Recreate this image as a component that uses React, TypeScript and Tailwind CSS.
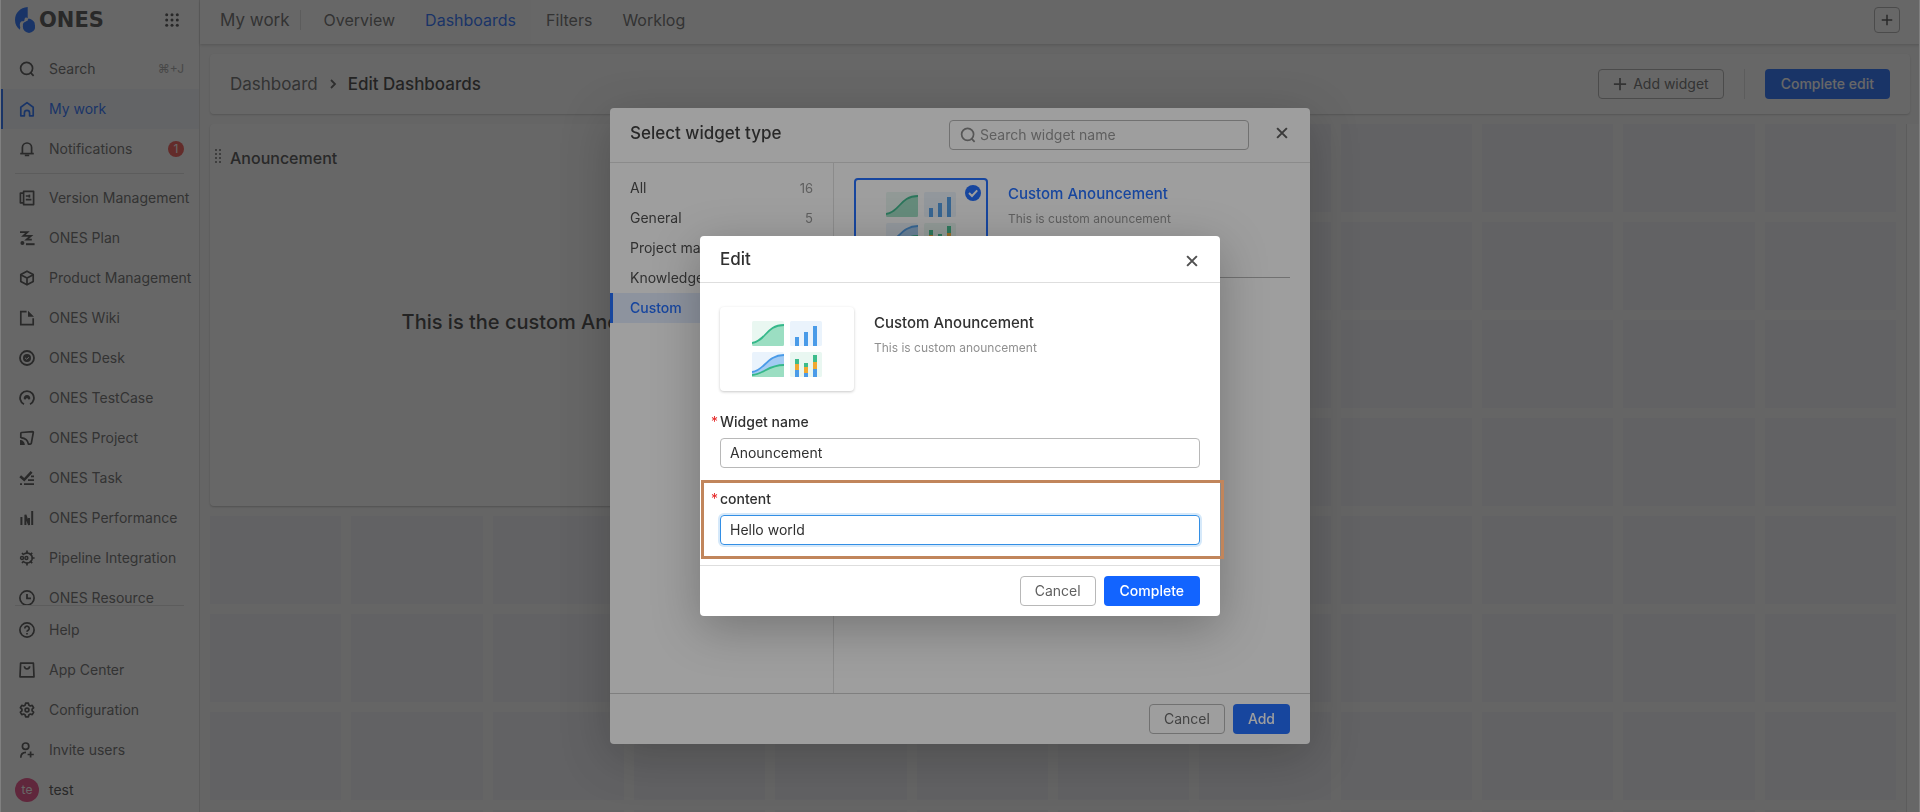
import type { ReactNode } from "react";

type IconProps = { children: ReactNode; className?: string };

function Icon({ children, className = "size-4" }: IconProps) {
  return (
    <svg
      viewBox="0 0 16 16"
      className={`${className} shrink-0`}
      fill="none"
      stroke="currentColor"
      strokeWidth="1.7"
      aria-hidden="true"
    >
      {children}
    </svg>
  );
}

const SearchIcon = ({ className }: { className?: string }) => (
  <Icon className={className}>
    <circle cx="7.6" cy="7.3" r="6" />
    <path d="M11.6 11.6 14.6 14.8" />
  </Icon>
);

const HomeIcon = () => (
  <Icon>
    <path d="M1.8 6.2 8 1.6l6.200 4.600v8.600H10.600v-2.800a2.600 2.600 0 0 0-5.200 0v2.800H1.800z" strokeLinejoin="round" />
  </Icon>
);

const BellIcon = () => (
  <Icon>
    <path d="M3.400 12.400V6.600a4.600 4.600 0 0 1 9.200 0v5.800" />
    <path d="M1.200 12.600h13.600" />
    <path d="M5.800 14.400h4.400" />
  </Icon>
);

const VersionIcon = () => (
  <Icon>
    <path d="M4.600 1.400h10v13.200h-10z" strokeLinejoin="round" />
    <path d="M4.600 3.200H1.400v9.600h3.200" strokeLinejoin="round" />
    <path d="M6.800 6h3.400M6.800 9.600h5.600" />
    <path d="M10.400 4.600v3" />
  </Icon>
);

const PlanIcon = () => (
  <Icon>
    <path d="M1 2.200h7.400L4.400 5.800h7.600L7.600 9.600h5.200" strokeWidth="1.800" />
    <path d="M7 14.200h8.600" strokeWidth="2" />
    <circle cx="3.400" cy="13" r="2" fill="currentColor" stroke="none" />
  </Icon>
);

const CubeIcon = () => (
  <Icon>
    <path d="M8 1.200 14.200 4.600v6.800L8 14.800 1.800 11.400V4.600z" strokeLinejoin="round" />
    <path d="M2.200 5 8 8l5.800-3M8 8v6.400" />
  </Icon>
);

const WikiIcon = () => (
  <Icon>
    <path d="M7.600 1.600H1.800v13h12.400V8.200" />
    <path d="M9 .8v6h6z" fill="currentColor" stroke="none" />
  </Icon>
);

const DeskIcon = () => (
  <Icon>
    <circle cx="8" cy="8" r="7" strokeWidth="1.800" />
    <circle cx="8" cy="8" r="4" fill="currentColor" stroke="none" />
    <path d="M6 7.800 7.600 9.200 10 7.200" stroke="#ffffff" strokeWidth="1" />
  </Icon>
);

const TestCaseIcon = () => (
  <Icon>
    <path d="M5 14.200a6.900 6.900 0 1 1 6 0" strokeWidth="1.800" />
    <path d="M4.800 9.200a3.300 3.300 0 1 1 6.400 0l-1.800.4-1.400-1.800-1.400 1.800z" fill="currentColor" stroke="none" />
  </Icon>
);

const ProjectIcon = () => (
  <Icon>
    <path d="M1.800 8V3.400Q1.800 2.600 2.600 2.500L13.400 1.600Q14.400 1.600 14.300 2.600L12.300 13.400Q12.100 14.200 11.200 14.200H9.400C9 10.800 6.400 8.200 1.800 7.600" strokeLinejoin="round" />
    <path d="M1 10c2.600 0 4.800 2 4.800 5H1z" fill="currentColor" stroke="none" />
  </Icon>
);

const TaskIcon = () => (
  <Icon>
    <path d="M1.200 6.200 5.200 9.800 12.600 1.800" strokeWidth="2.600" />
    <path d="M12 6.400h3M9 10.200h6M5 14.200h10M1 14.200h2" strokeWidth="1.800" />
  </Icon>
);

const PerformanceIcon = () => (
  <Icon>
    <path d="M2.400 7v8M13.200 1v14" strokeWidth="2" />
    <path d="M6.400 15V4.800L10 15V8" strokeWidth="2" />
  </Icon>
);

const PipelineIcon = () => (
  <Icon>
    <path d="M8 .600v3M8 12.400v3M12.400 8h3.200M3 3l1.800 1.800M13.200 2.800l-2 2M13.200 13.200l-2-2M3 13l1.800-1.800" />
    <path d="M5 4.200a5 5 0 1 1 0 7.600" />
    <circle cx="3" cy="8" r="1.500" strokeWidth="1.400" />
    <circle cx="7.400" cy="8" r="1.500" strokeWidth="1.400" />
  </Icon>
);

const ClockIcon = () => (
  <Icon>
    <circle cx="8" cy="8" r="7.100" />
    <path d="M8 4v4.400h4" strokeWidth="1.800" />
  </Icon>
);

const HelpIcon = () => (
  <Icon>
    <circle cx="8" cy="8" r="7.100" />
    <path d="M5.800 6.400a2.200 2.200 0 1 1 3.400 1.800c-.8.500-1.200.8-1.200 1.600" />
    <path d="M8 11v1.600" />
  </Icon>
);

const AppCenterIcon = () => (
  <Icon>
    <path d="M1.600 1.200h12.800l.6 13.600H1z" strokeLinejoin="round" />
    <path d="M5.400 4.200a2.600 2.600 0 0 0 5.200 0" />
  </Icon>
);

const GearIcon = () => (
  <Icon>
    <path
      d="M6.600 1.200h2.800l.4 1.900 1.500.9 1.900-.6 1.400 2.400-1.500 1.300v1.800l1.500 1.300-1.400 2.400-1.900-.6-1.500.9-.4 1.900H6.600l-.4-1.900-1.500-.9-1.900.6-1.400-2.400 1.500-1.300V7.100L1.400 5.800l1.400-2.400 1.900.6 1.500-.9z"
      strokeLinejoin="round"
    />
    <circle cx="8" cy="8" r="1.900" />
  </Icon>
);

const InviteIcon = () => (
  <Icon>
    <circle cx="6.600" cy="4.200" r="3.200" />
    <path d="M1.800 15.800c0-3.400 2-5.400 5.200-5.400" />
    <path d="M11.600 9.400v6.200M8.600 12.500h6.200" />
  </Icon>
);

const PlusIcon = ({ className }: { className?: string }) => (
  <Icon className={className}>
    <path d="M8 1v14M1 8h14" strokeWidth="2" />
  </Icon>
);

const CloseIcon = () => (
  <Icon className="size-3">
    <path d="M1.500 1.500 14.500 14.500M14.500 1.500 1.500 14.500" strokeWidth="2.700" />
  </Icon>
);

function Logo() {
  return (
    <svg viewBox="0 0 20 26" className="h-[26px] w-5 shrink-0" fill="#1264ff" aria-hidden="true">
      <path d="M12.700 0C5 .7 0 6 0 13c0 4 1.800 7.500 4.800 9.800l.5-2.400c-.7-2.200-.7-4.500.7-5.700 1-.8 2.200 0 3.100-.8.8-.8.1-2.300 1.200-3.100.8-.6 1.700-.2 2.400.5z" />
      <path d="M8 19.200c-.6-2.400.5-3.500 2.200-3.700 1.900-.2 2.700-1.100 2.500-2.600l.8-1.500c2.700.3 5 1.800 6.200 4.700l-1.500 3.900z" />
      <circle cx="14" cy="19.700" r="6.200" />
    </svg>
  );
}

type NavItem = { label: string; icon: ReactNode };

const appItems: NavItem[] = [
  { label: "Version Management", icon: <VersionIcon /> },
  { label: "ONES Plan", icon: <PlanIcon /> },
  { label: "Product Management", icon: <CubeIcon /> },
  { label: "ONES Wiki", icon: <WikiIcon /> },
  { label: "ONES Desk", icon: <DeskIcon /> },
  { label: "ONES TestCase", icon: <TestCaseIcon /> },
  { label: "ONES Project", icon: <ProjectIcon /> },
  { label: "ONES Task", icon: <TaskIcon /> },
  { label: "ONES Performance", icon: <PerformanceIcon /> },
  { label: "Pipeline Integration", icon: <PipelineIcon /> },
  { label: "ONES Resource", icon: <ClockIcon /> },
];

const footerItems: NavItem[] = [
  { label: "Help", icon: <HelpIcon /> },
  { label: "App Center", icon: <AppCenterIcon /> },
  { label: "Configuration", icon: <GearIcon /> },
  { label: "Invite users", icon: <InviteIcon /> },
];

function NavLink({ label, icon, active = false, children }: NavItem & { active?: boolean; children?: ReactNode }) {
  return (
    <a
      href="#"
      className={`flex h-10 shrink-0 items-center border-l-3 pr-[15px] pl-4 ${
        active ? "border-[#1264ff] bg-[#f1f6fc] text-[#1264ff]" : "border-transparent text-[#606060]"
      }`}
    >
      <span className={active ? "" : "text-[#404040]"}>{icon}</span>
      <span className="ml-[14px] flex-1 whitespace-nowrap">{label}</span>
      {children}
    </a>
  );
}

function Sidebar() {
  return (
    <nav className="flex w-50 shrink-0 flex-col border-r border-[#dedede] bg-white pb-0.5">
      <div className="flex h-[49px] shrink-0 items-start justify-between pt-[7px] pr-5 pl-[15px]">
        <a href="#" className="flex items-center gap-1 text-[#404040]">
          <Logo />
          <span className="font-['DejaVu_Sans',sans-serif] text-[21px] leading-6 font-bold">ONES</span>
        </a>
        <button type="button" aria-label="Apps" className="mt-1.5 text-[#404040]">
          <svg viewBox="0 0 14 14" className="size-3.5" fill="currentColor" aria-hidden="true">
            {[1.7, 7, 12.3].map((y) => [1.7, 7, 12.3].map((x) => <circle key={`${x}-${y}`} cx={x} cy={y} r="1.5" />))}
          </svg>
        </button>
      </div>
      <NavLink label="Search" icon={<SearchIcon />}>
        <span className="text-xs text-[#a0a0a0]">⌘+J</span>
      </NavLink>
      <NavLink label="My work" icon={<HomeIcon />} active />
      <NavLink label="Notifications" icon={<BellIcon />}>
        <span className="flex size-4 items-center justify-center rounded-full bg-[#f24a45] text-xs text-white">1</span>
      </NavLink>
      <div className="mx-[15px] mt-1 h-px shrink-0 bg-[#dedede]" />
      <div className="min-h-0 flex-1 overflow-hidden pt-1">
        <div className="flex flex-col">
          {appItems.map((item) => (
            <NavLink key={item.label} {...item} />
          ))}
        </div>
      </div>
      <div className="mx-[15px] mb-1 h-px shrink-0 bg-[#dedede]" />
      {footerItems.map((item) => (
        <NavLink key={item.label} {...item} />
      ))}
      <a href="#" className="flex h-10 shrink-0 items-center gap-2.5 pl-[15px] text-[#404040]">
        <span className="flex size-6 items-center justify-center rounded-full bg-[#e83a7a] text-xs text-white">te</span>
        test
      </a>
    </nav>
  );
}

const tabs = ["Overview", "Dashboards", "Filters", "Worklog"];

function TopBar() {
  return (
    <header className="z-10 flex h-11 shrink-0 items-center bg-white pr-5 pl-5 pb-3 shadow-[0_1px_3px_rgba(0,0,0,0.2)]">
      <h1 className="mt-2 text-[17px] leading-6 text-[#606060]">My work</h1>
      <span className="mt-2 ml-2.5 h-5 w-px bg-[#dedede]" />
      <div className="-mb-3 ml-2 flex h-11 text-base">
        {tabs.map((tab) => (
          <a
            key={tab}
            href="#"
            className={`flex items-center px-[15px] pb-1 ${
              tab === "Dashboards" ? "bg-[#fafafa] text-[#1264ff]" : "text-[#606060]"
            }`}
          >
            {tab}
          </a>
        ))}
      </div>
      <button
        type="button"
        aria-label="Create"
        className="mt-2 ml-auto flex size-[26px] items-center justify-center rounded border border-[#a8a8a8] text-[#404040]"
      >
        <PlusIcon className="size-3" />
      </button>
    </header>
  );
}

function Toolbar() {
  return (
    <div className="mx-2.5 mt-2.5 flex h-15 shrink-0 items-center rounded bg-white px-5 shadow-[0_1px_2px_rgba(0,0,0,0.2)]">
      <a href="#" className="text-[17px] text-[#606060]">
        Dashboard
      </a>
      <svg viewBox="0 0 8 10" className="mx-[11px] h-2.5 w-2" fill="none" stroke="#505050" strokeWidth="1.8" aria-hidden="true">
        <path d="M2 1l4 4-4 4" />
      </svg>
      <span className="text-[17px] font-medium text-[#303030]">Edit Dashboards</span>
      <button
        type="button"
        className="ml-auto flex h-[30px] items-center gap-1.5 rounded border border-[#a8a8a8] px-[14px] text-[#606060]"
      >
        <PlusIcon className="size-3.5" />
        Add widget
      </button>
      <span className="mx-5 h-[30px] w-px bg-[#dedede]" />
      <button type="button" className="h-[30px] rounded bg-[#1264ff] px-4 font-medium text-white">
        Complete edit
      </button>
    </div>
  );
}

function Board() {
  return (
    <div className="mt-2.5 flex min-h-0 flex-1 overflow-hidden">
      <div className="grid flex-1 auto-rows-[88px] grid-cols-12 gap-2.5 px-2.5">
        <section className="col-span-5 row-span-4 flex flex-col rounded bg-white shadow-[0_1px_2px_rgba(0,0,0,0.25)]">
          <div className="flex h-[68px] shrink-0 items-center gap-[9px] pl-[5px]">
            <svg viewBox="0 0 6 14" className="mb-1 h-3.5 w-1.5" fill="#808080" aria-hidden="true">
              {[0, 4, 8, 12].map((y) => [0, 4].map((x) => <rect key={`${x}-${y}`} x={x} y={y} width="2" height="2" />))}
            </svg>
            <h2 className="text-base font-medium text-[#404040]">Anouncement</h2>
          </div>
          <p className="flex flex-1 items-center justify-center pb-[54px] text-xl font-medium text-[#303030]">
            This is the custom Anouncement
          </p>
        </section>
        {Array.from({ length: 76 }, (_, i) => (
          <div key={i} className="bg-[#efeff5]" />
        ))}
      </div>
      <div className="w-3.5 shrink-0 border-l border-[#dcdcdc] bg-white" />
    </div>
  );
}

function ChartPreview() {
  return (
    <svg viewBox="0 0 70 56" className="h-14 w-[70px]" fill="none" aria-hidden="true">
      <rect width="32" height="25" rx="1.5" fill="#e9f7f1" />
      <path d="M0 22C14 20 14 4 32 4v19.5q0 1.5-1.5 1.5H1.5Q0 25 0 23.5z" fill="#9bdec2" />
      <path d="M0 22C14 20 14 4 32 4" stroke="#35b88a" strokeWidth="1.8" />
      <rect x="38" width="32" height="25" rx="1.5" fill="#eaf3fc" />
      <path d="M43 16h4v9h-4zM52 11h4v14h-4zM61 5h4v20h-4z" fill="#4a9be8" />
      <rect y="31" width="32" height="25" rx="1.5" fill="#eaf3fc" />
      <path d="M0 51c12-1 15-17 32-17v22H0z" fill="#a3cbf3" />
      <path d="M0 51c12-1 15-17 32-17" stroke="#4a9be8" strokeWidth="1.8" />
      <path d="M0 54c12-1 16-10 32-10v10.5q0 1.5-1.5 1.5H0z" fill="#9bdec2" />
      <path d="M0 54c12-1 16-10 32-10" stroke="#35b88a" strokeWidth="1.8" />
      <rect x="38" y="31" width="32" height="25" rx="1.5" fill="#e9f7f1" />
      <path d="M43 38h4v5h-4zM52 42h4v4h-4zM61 34h4v7h-4z" fill="#3cbc8b" />
      <path d="M43 43h4v6h-4zM52 46h4v6h-4zM61 41h4v7h-4z" fill="#f0a830" />
      <path d="M43 49h4v7h-4zM52 52h4v4h-4zM61 48h4v8h-4z" fill="#4a9be8" />
    </svg>
  );
}

function Overlay({ children }: { children: ReactNode }) {
  return (
    <div className="fixed inset-0 z-20 flex items-center justify-center bg-[rgba(31,31,31,0.43)] pt-10">{children}</div>
  );
}

const categories = [
  { name: "All", count: 16 },
  { name: "General", count: 5 },
  { name: "Project management", count: 6 },
  { name: "Knowledge", count: 4 },
  { name: "Custom", count: 1 },
];

function SelectWidgetDialog() {
  return (
    <Overlay>
      <div
        role="dialog"
        aria-labelledby="select-title"
        className="flex h-[636px] w-[700px] flex-col rounded-sm bg-white shadow-[0_12px_48px_rgba(0,0,0,0.26)]"
      >
        <div className="flex h-[55px] shrink-0 items-start border-b border-[#dedede] pt-3 pr-[22px] pl-5">
          <h2 id="select-title" className="mt-px flex-1 text-[17px] leading-6 font-medium text-[#303030]">
            Select widget type
          </h2>
          <label className="flex h-[30px] w-75 items-center gap-1 rounded border border-[#b0b0b0] px-2.5 text-[#808080]">
            <SearchIcon className="size-4" />
            <input
              type="search"
              aria-label="Search widget name"
              placeholder="Search widget name"
              className="min-w-0 flex-1 outline-none placeholder:text-[#909090]"
            />
          </label>
          <button type="button" aria-label="Close" className="mt-[7px] ml-[27px] text-[#505050]">
            <CloseIcon />
          </button>
        </div>
        <div className="flex min-h-0 flex-1">
          <ul className="w-56 shrink-0 border-r border-[#dedede] pt-2.5">
            {categories.map(({ name, count }) => (
              <li key={name}>
                <button
                  type="button"
                  className={`flex h-[30px] w-full items-center justify-between border-l-3 pr-5 pl-[17px] ${
                    name === "Custom"
                      ? "border-[#1264ff] bg-[#e1ebff] font-medium text-[#1264ff]"
                      : "border-transparent text-[#404040]"
                  }`}
                >
                  {name}
                  <span className="text-[13px] text-[#909090]">{count}</span>
                </button>
              </li>
            ))}
          </ul>
          <div className="flex-1 px-5 pt-[15px]">
            <div className="flex h-25 items-start gap-5 border-b border-[#b0b0b0]">
              <div className="relative flex h-[84px] w-[134px] items-center justify-center rounded-sm border-2 border-[#1264ff]">
                <ChartPreview />
                <svg viewBox="0 0 16 16" className="absolute top-[5px] right-[5px] size-4" fill="none" aria-hidden="true">
                  <circle cx="8" cy="8" r="8" fill="#1264ff" />
                  <path d="M4 8l3 3 5.200-5.600" stroke="#ffffff" strokeWidth="2" />
                </svg>
              </div>
              <div className="pt-1">
                <h3 className="text-[15px] leading-6 font-medium text-[#1264ff]">Custom Anouncement</h3>
                <p className="mt-[3px] text-xs leading-5 text-[#909090]">This is custom anouncement</p>
              </div>
            </div>
          </div>
        </div>
        <div className="flex h-[51px] shrink-0 items-center justify-end gap-2 border-t border-[#c8c8c8] px-5">
          <button type="button" className="h-[30px] rounded border border-[#b0b0b0] px-[14px] text-[#606060]">
            Cancel
          </button>
          <button type="button" className="h-[30px] rounded bg-[#1264ff] px-[15px] font-medium text-white">
            Add
          </button>
        </div>
      </div>
    </Overlay>
  );
}

function Field({ id, label, value, focused = false }: { id: string; label: string; value: string; focused?: boolean }) {
  return (
    <div className="flex flex-col gap-1.5">
      <label htmlFor={id} className="-ml-[9px] flex items-center font-medium leading-5 text-[#303030]">
        <span className="w-[9px] font-normal text-[#e52727]">*</span>
        {label}
      </label>
      <input
        id={id}
        defaultValue={value}
        className={`h-[30px] rounded border px-[9px] pb-px text-[#303030] outline-none ${
          focused ? "border-[#338fe5] shadow-[0_0_0_2px_#d6e9fa]" : "border-[#b8b8b8]"
        }`}
      />
    </div>
  );
}

function EditDialog() {
  return (
    <Overlay>
      <div
        role="dialog"
        aria-labelledby="edit-title"
        className="flex w-[520px] flex-col rounded-sm bg-white shadow-[0_12px_48px_rgba(0,0,0,0.26)]"
      >
        <div className="flex h-[47px] items-center justify-between border-b border-[#dedede] pr-[22px] pl-5">
          <h2 id="edit-title" className="text-[17px] leading-6 font-medium text-[#303030]">
            Edit
          </h2>
          <button type="button" aria-label="Close" className="mt-1 text-[#505050]">
            <CloseIcon />
          </button>
        </div>
        <div className="flex items-start gap-5 px-5 pt-6">
          <div className="flex h-[84px] w-[134px] items-center justify-center rounded shadow-[0_1px_3px_rgba(0,0,0,0.22)]">
            <ChartPreview />
          </div>
          <div className="pt-1">
            <h3 className="text-[15px] leading-6 font-medium text-[#303030]">Custom Anouncement</h3>
            <p className="mt-[3px] text-xs leading-5 text-[#909090]">This is custom anouncement</p>
          </div>
        </div>
        <div className="flex flex-col gap-[21px] px-5 pt-[21px] pb-5">
          <Field id="widget-name" label="Widget name" value="Anouncement" />
          <div className="relative">
            <Field id="widget-content" label="content" value="Hello world" focused />
            <div className="pointer-events-none absolute -top-[9px] -right-6 -bottom-3.5 -left-[19px] border-3 border-[#c1855b]" />
          </div>
        </div>
        <div className="flex h-[51px] items-center justify-end gap-2 border-t border-[#dedede] px-5">
          <button type="button" className="h-[30px] rounded border border-[#b8b8b8] px-[14px] text-[#606060]">
            Cancel
          </button>
          <button type="button" className="h-[30px] rounded bg-[#1264ff] px-4 font-medium text-white">
            Complete
          </button>
        </div>
      </div>
    </Overlay>
  );
}

export default function App() {
  return (
    <div className="flex h-screen overflow-hidden bg-[#f8f8f8] font-['Inter',sans-serif] text-sm">
      <Sidebar />
      <main className="flex min-w-0 flex-1 flex-col">
        <TopBar />
        <Toolbar />
        <Board />
      </main>
      <SelectWidgetDialog />
      <EditDialog />
      <div className="pointer-events-none fixed inset-0 z-30 border-x border-[#808080]" />
    </div>
  );
}
